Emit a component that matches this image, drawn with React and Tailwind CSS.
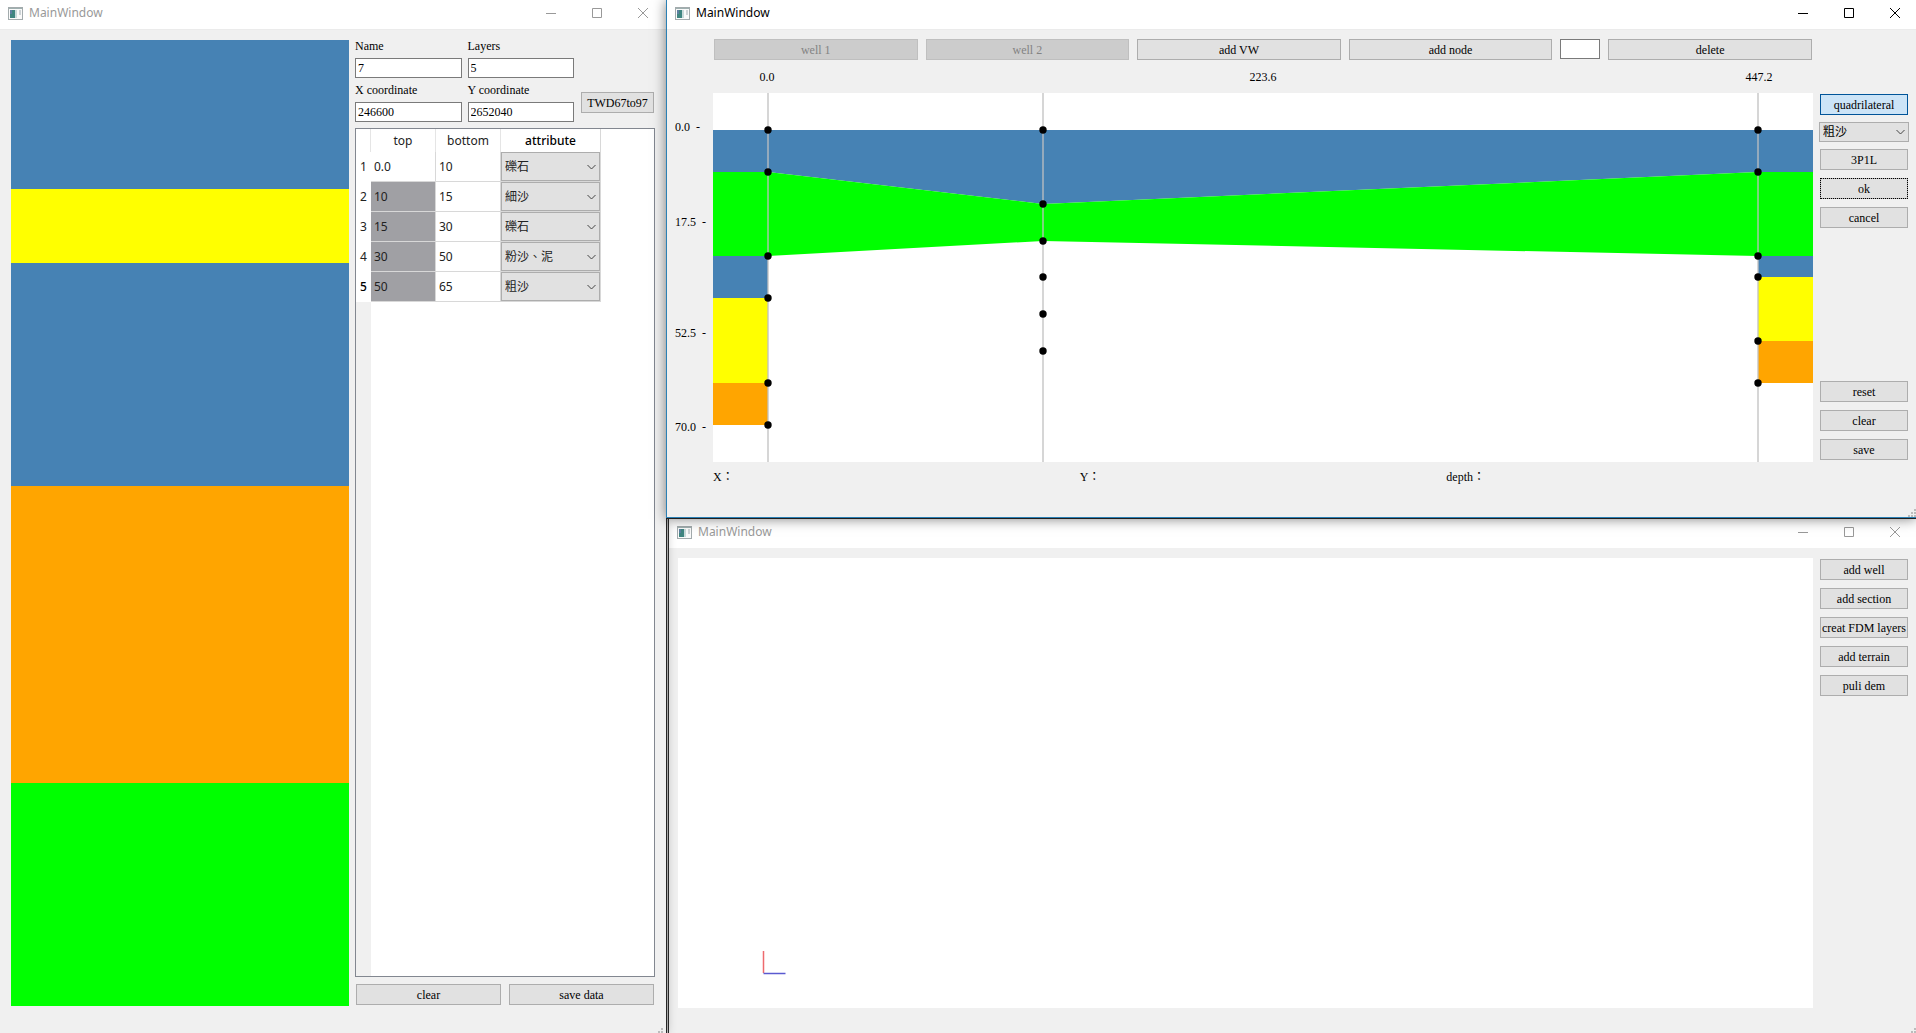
import React from "react";

const SERIF = "font-['Liberation_Serif','Noto_Sans_CJK_TC',serif]";
const SANS = "font-['Noto_Sans','Noto_Sans_CJK_TC',sans-serif]";

const SOILS = ["礫石", "粗沙", "細沙", "粉沙、泥"];

const LAYERS = [
  { top: "0.0", bottom: "10", soil: "礫石", depth: 10, fill: "bg-[#4682b4]" },
  { top: "10", bottom: "15", soil: "細沙", depth: 5, fill: "bg-[#ffff00]" },
  { top: "15", bottom: "30", soil: "礫石", depth: 15, fill: "bg-[#4682b4]" },
  { top: "30", bottom: "50", soil: "粉沙、泥", depth: 20, fill: "bg-[#ffa500]" },
  { top: "50", bottom: "65", soil: "粗沙", depth: 15, fill: "bg-[#00ff00]" },
];

const WELLS = [
  { x: 55, nodes: [37, 79, 163, 205, 290, 332] },
  { x: 330, nodes: [37, 111, 148, 184, 221, 258] },
  { x: 1045, nodes: [37, 79, 163, 184, 248, 290] },
];

function AppIcon() {
  return (
    <svg className="h-[13px] w-[15px]" viewBox="0 0 15 13" aria-hidden="true">
      <rect x="0.5" y="0.5" width="14" height="12" fill="#fafafa" stroke="#a3abad" />
      <rect x="1" y="1" width="13" height="1" fill="#9fb0b0" />
      <rect x="2" y="3" width="5" height="8" fill="#3f8580" />
      <rect x="2" y="3" width="2" height="4" fill="#5d7fa0" />
      <rect x="7" y="3" width="2" height="8" fill="#c9dada" />
      <rect x="11" y="3" width="2" height="5" fill="#cdd3d6" />
    </svg>
  );
}

function TitleBar({ active, pad }) {
  return (
    <header className={`flex h-[29px] shrink-0 items-center ${pad} ${active ? "bg-white text-black" : "text-[#999999]"}`}>
      <div className="flex flex-1 items-center gap-[6px] pb-[3px]">
        <AppIcon />
        <h1 className={`text-[12px] leading-[16px] ${SANS}`}>MainWindow</h1>
      </div>
      <div className="flex gap-[34px] pb-[3px]">
        <button type="button" aria-label="Minimize" className="h-[12px] w-[12px]">
          <svg viewBox="0 0 12 12" className="h-[12px] w-[12px]" stroke="currentColor" fill="none"><path d="M1 6.5h10" /></svg>
        </button>
        <button type="button" aria-label="Maximize" className="h-[12px] w-[12px]">
          <svg viewBox="0 0 12 12" className="h-[12px] w-[12px]" stroke="currentColor" fill="none"><path d="M1.500 1.500h9v9h-9z" /></svg>
        </button>
        <button type="button" aria-label="Close" className="h-[12px] w-[12px]">
          <svg viewBox="0 0 12 12" className="h-[12px] w-[12px]" stroke="currentColor" fill="none"><path d="M1 1l10 10M11 1L1 11" /></svg>
        </button>
      </div>
    </header>
  );
}

function PushButton({ children, look = "border border-[#adadad] bg-[#e1e1e1] text-black", size = "w-full", disabled }) {
  return (
    <button type="button" disabled={disabled} className={`h-[21px] shrink-0 whitespace-nowrap text-center text-[12px] leading-[18px] ${size} ${look}`}>
      {children}
    </button>
  );
}

function Combo({ value, label, look }) {
  return (
    <div className={`relative w-full ${look}`}>
      <select aria-label={label} defaultValue={value} className="h-full w-full appearance-none border border-[#adadad] bg-[#e1e1e1] pl-[3px] text-[12px] leading-[16px] outline-none">
        {SOILS.map((s) => <option key={s}>{s}</option>)}
      </select>
      <svg className="pointer-events-none absolute inset-y-0 right-[4px] my-auto h-[8px] w-[9px]" viewBox="0 0 9 8" fill="none" stroke="#444" aria-hidden="true">
        <path d="M0.500 2l4 4 4-4" />
      </svg>
    </div>
  );
}

function Grip({ view = "0 0 9 6", size = "h-[6px] w-[9px]" }) {
  return (
    <svg className={size} viewBox={view} fill="#bcbcbc" aria-hidden="true">
      <path d="M7 1h2v2h-2zM7 4h2v2h-2zM7 7h2v2h-2zM4 4h2v2h-2zM4 7h2v2h-2zM1 7h2v2h-2z" />
    </svg>
  );
}

function Field({ id, label, value }) {
  return (
    <div className="flex flex-col">
      <label htmlFor={id} className="h-[18px] text-[12px] leading-[12px]">{label}</label>
      <input id={id} defaultValue={value} className="h-[20px] w-full border border-[#7a7a7a] bg-white px-[2px] text-[12px] outline-none" />
    </div>
  );
}

function BoreholeWindow() {
  return (
    <section className="relative z-10 row-span-2 flex min-w-0 flex-col bg-[#f0f0f0] shadow-[0_0_10px_rgba(0,0,0,0.3)]">
      <div className="border-b border-[#ebebeb] bg-white">
        <TitleBar pad="pl-[8px] pr-[17px]" />
      </div>
      <div className="flex min-h-0 flex-1 gap-[6px] pl-[11px] pr-[11px] pt-[10px]">
        <div className="flex min-w-0 flex-[338] flex-col">
          {LAYERS.map((l, i) => (
            <div key={i} className={l.fill} style={{ flexGrow: l.depth }} />
          ))}
        </div>
        <div className="flex min-w-0 flex-[300] flex-col">
          <div className="flex items-end gap-[7px]">
            <div className="grid flex-1 grid-cols-2 gap-x-[6px] gap-y-[6px]">
              <Field id="name" label="Name" value="7" />
              <Field id="layers" label="Layers" value="5" />
              <Field id="xc" label="X coordinate" value="246600" />
              <Field id="yc" label="Y coordinate" value="2652040" />
            </div>
            <div className="mb-[9px] mr-px"><PushButton size="w-[73px]">TWD67to97</PushButton></div>
          </div>
          <div className="mt-[6px] flex min-h-0 flex-1 flex-col border border-[#828790] bg-white">
            <table className={`w-[245px] shrink-0 table-fixed border-separate border-spacing-0 text-[12px] leading-[16px] text-[#222] ${SANS}`}>
              <colgroup>
                <col className="w-[15px]" />
                <col className="w-[65px]" />
                <col className="w-[65px]" />
                <col className="w-[100px]" />
              </colgroup>
              <thead>
                <tr className="h-[23px]">
                  <td className="border-r border-[#e5e5e5] p-0" />
                  <th scope="col" className="border-r border-[#e5e5e5] p-0 font-normal">top</th>
                  <th scope="col" className="border-r border-[#e5e5e5] p-0 font-normal">bottom</th>
                  <th scope="col" className="border-r border-[#d8d8d8] p-0 font-medium text-black">attribute</th>
                </tr>
              </thead>
              <tbody>
                {LAYERS.map((l, i) => (
                  <tr key={i} className="h-[30px]">
                    <th scope="row" className={`p-0 text-center ${i === 4 ? "font-medium text-black" : "font-normal"}`}>{i + 1}</th>
                    <td className={`border-b border-r border-[#d8d8d8] p-0 pl-[3px] ${i ? "bg-[#a0a0a4]" : ""}`}>{l.top}</td>
                    <td className="border-b border-r border-[#d8d8d8] p-0 pl-[3px]">{l.bottom}</td>
                    <td className="border-b border-r border-[#d8d8d8] p-0">
                      <Combo value={l.soil} label={`attribute ${i + 1}`} look="h-[29px]" />
                    </td>
                  </tr>
                ))}
              </tbody>
            </table>
            <div className="w-[15px] flex-1 bg-[#f0f0f0]" />
          </div>
          <div className="mx-px mb-px mt-[7px] flex gap-[8px]">
            <PushButton size="min-w-0 flex-1">clear</PushButton>
            <PushButton size="min-w-0 flex-1">save data</PushButton>
          </div>
        </div>
      </div>
      <div className="flex h-[27px] items-end justify-end pr-[3px]"><Grip /></div>
    </section>
  );
}

function SectionChart() {
  return (
    <svg viewBox="0 0 1100 369" className="block w-full bg-white" role="img" aria-label="Section">
      <path d="M0 37H1100V79H1045L330 111L55 79H0z" fill="#4682b4" />
      <path d="M0 79H55L330 111L1045 79H1100V163H1045L330 148L55 163H0z" fill="#00ff00" />
      <path d="M0 163h55v42h-55zM1045 163h55v21h-55z" fill="#4682b4" />
      <path d="M0 205h55v85h-55zM1045 184h55v64h-55z" fill="#ffff00" />
      <path d="M0 290h55v42h-55zM1045 248h55v42h-55z" fill="#ffa500" />
      {WELLS.map((w) => (
        <g key={w.x}>
          <path d={`M${w.x} 0V369`} stroke="#c0c0c0" strokeOpacity="0.65" strokeWidth="2" />
          {w.nodes.map((y) => <circle key={y} cx={w.x} cy={y} r="3.700" />)}
        </g>
      ))}
    </svg>
  );
}

function SectionWindow() {
  const disabled = "bg-[#cccccc] text-[#838383] border border-[#bfbfbf]";
  return (
    <section className="relative z-20 flex min-w-0 flex-col border-b border-l border-[#2a80b5] bg-[#f0f0f0] shadow-[0_1px_12px_rgba(0,0,0,0.5)]">
      <div className="border-b border-[#ebebeb] bg-white">
        <TitleBar active pad="pl-[8px] pr-[15px]" />
      </div>
      <div className="flex pl-[8px] pr-[7px] pt-[9px]">
        <div className="grid min-w-0 flex-1 grid-cols-[38px_minmax(0,1fr)]">
          <div className="col-start-2 flex gap-[8px] pl-px pr-px">
            <PushButton size="min-w-0 flex-1" look={disabled} disabled>well 1</PushButton>
            <PushButton size="min-w-0 flex-1" look={disabled} disabled>well 2</PushButton>
            <PushButton size="min-w-0 flex-1">add VW</PushButton>
            <PushButton size="min-w-0 flex-1">add node</PushButton>
            <input aria-label="node" className="h-[20px] w-[40px] border border-[#7a7a7a] bg-white px-[2px] text-[12px] outline-none" />
            <PushButton size="min-w-0 flex-1">delete</PushButton>
          </div>
          <div className="col-start-2 flex h-[33px] items-center justify-between px-[34px] text-center text-[12px] leading-[14px]">
            <span className="w-[40px]">0.0</span>
            <span className="w-[40px]">223.6</span>
            <span className="w-[40px]">447.2</span>
          </div>
          <div className="grid grid-rows-[27fr_14px_81fr_14px_97fr_14px_80fr_14px_28fr] whitespace-pre text-[12px] leading-[14px]">
            <span className="row-start-2">0.0  -</span>
            <span className="row-start-4">17.5  -</span>
            <span className="row-start-6">52.5  -</span>
            <span className="row-start-8">70.0  -</span>
          </div>
          <SectionChart />
          <div className="col-start-2 grid grid-cols-3 pt-[8px] text-[12px] leading-[14px]">
            <span>X：</span>
            <span>Y：</span>
            <span>depth：</span>
          </div>
        </div>
        <div className="flex w-[96px] shrink-0 flex-col items-center gap-[8px] pb-[24px] pl-[6px] pt-[55px]">
          <PushButton size="w-[88px]" look="border border-[#005499] bg-[#cce4f7]">quadrilateral</PushButton>
          <div className="-my-px w-[90px]"><Combo value="粗沙" label="soil" look="h-[20px]" /></div>
          <PushButton size="w-[88px]">3P1L</PushButton>
          <PushButton size="w-[88px]" look="border border-[#adadad] bg-[#e1e1e1] outline-1 -outline-offset-1 outline-dotted outline-black">ok</PushButton>
          <PushButton size="w-[88px]">cancel</PushButton>
          <div className="flex-1" />
          <PushButton size="w-[88px]">reset</PushButton>
          <PushButton size="w-[88px]">clear</PushButton>
          <PushButton size="w-[88px]">save</PushButton>
        </div>
      </div>
      <div className="flex min-h-[9px] flex-1 items-end justify-end"><Grip view="0 0 9 9" size="h-[9px] w-[9px]" /></div>
    </section>
  );
}

function ModelWindow() {
  return (
    <section className="flex min-w-0 border-t border-[#2b2b2b]">
      <div className="w-[3px] border-x border-[#2b2b2b] bg-[#bdbdbd]" />
      <div className="flex min-w-0 flex-1 flex-col bg-[#f0f0f0]">
        <div className="bg-white">
          <TitleBar pad="pl-[8px] pr-[15px]" />
        </div>
        <div className="flex min-h-0 flex-1 pl-[9px] pr-[7px] pt-[10px]">
          <div className="flex min-w-0 flex-1 items-end bg-white pb-[33px] pl-[84px]">
            <svg className="h-[24px] w-[26px]" viewBox="0 0 26 24" fill="none" strokeWidth="1.500" aria-label="Axes">
              <path d="M1.500 0v22" stroke="#ee6a6e" />
              <path d="M1.500 22.500h22" stroke="#5a5ad0" />
            </svg>
          </div>
          <div className="flex w-[96px] shrink-0 flex-col items-center gap-[8px] pl-[6px] pt-px">
            {["add well", "add section", "creat FDM layers", "add terrain", "puli dem"].map((t) => (
              <PushButton key={t} size="w-[88px]">{t}</PushButton>
            ))}
          </div>
        </div>
        <div className="flex h-[25px] items-end justify-end"><Grip /></div>
      </div>
    </section>
  );
}

export default function App() {
  return (
    <main className={`grid h-screen min-h-[760px] grid-cols-[minmax(0,666fr)_minmax(0,1250fr)] grid-rows-[minmax(518px,auto)_minmax(0,1fr)] overflow-hidden bg-[#f0f0f0] text-[12px] text-black ${SERIF}`}>
      <BoreholeWindow />
      <SectionWindow />
      <ModelWindow />
    </main>
  );
}
